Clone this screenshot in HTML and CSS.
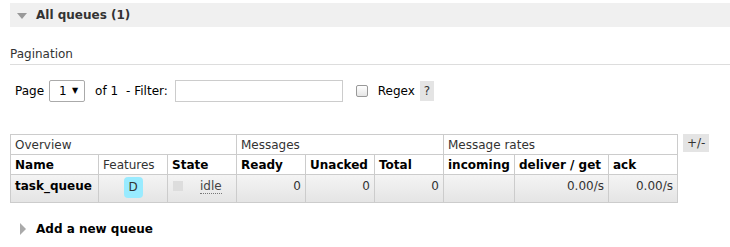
FILE: index.html
```html
<!DOCTYPE html>
<html lang="en">
<head>
  <meta charset="utf-8"/>
  <title>Queues</title>
  <link rel="stylesheet" href="styles.css">
</head>
<body>
  <div class="main">
    <div class="section">
      <div class="section-title"><span class="arrow down"></span>All queues (1)</div>
      <div class="section-body">
        <h3 class="pagination-title">Pagination</h3>
        <div class="pager">
          <span>Page</span>
          <span class="select">1 <span class="caret">&#9660;</span></span>
          <span class="of">of 1</span>
          <span>- Filter:</span>
          <span class="filter-input"></span>
          <span class="checkbox"></span>
          <span>Regex</span>
          <span class="help">?</span>
        </div>
        <div class="table-wrap">
          <table class="list">
            <thead>
              <tr class="group-row">
                <th colspan="3">Overview</th>
                <th colspan="3">Messages</th>
                <th colspan="3">Message rates</th>
              </tr>
              <tr>
                <th class="col-name">Name</th>
                <th class="col-features plain">Features</th>
                <th class="col-state">State</th>
                <th class="col-ready">Ready</th>
                <th class="col-unacked">Unacked</th>
                <th class="col-total">Total</th>
                <th class="col-incoming">incoming</th>
                <th class="col-deliver">deliver / get</th>
                <th class="col-ack">ack</th>
              </tr>
            </thead>
            <tbody>
              <tr>
                <td class="name">task_queue</td>
                <td class="c"><span class="badge">D</span></td>
                <td class="state"><span class="state-box"></span><abbr>idle</abbr></td>
                <td class="r">0</td>
                <td class="r">0</td>
                <td class="r">0</td>
                <td class="r"></td>
                <td class="r">0.00/s</td>
                <td class="r">0.00/s</td>
              </tr>
            </tbody>
          </table>
          <span class="toggle-cols">+/-</span>
        </div>
      </div>
    </div>
    <div class="section-title closed"><span class="arrow right"></span>Add a new queue</div>
  </div>
</body>
</html>
```

FILE: styles.css
```css
html, body { margin: 0; padding: 0; background: #fff; }
body { font-family: "DejaVu Sans", Verdana, sans-serif; font-size: 12px; color: #000; }
.main { padding: 3px 0 0 10px; }
.section-title { height: 24px; line-height: 24px; background: #f0f0f0; font-weight: bold; color: #333; padding-left: 26px; position: relative; }
.section-title.closed { background: none; color: #000; margin-top: 14px; }
.arrow { position: absolute; width: 0; height: 0; }
.arrow.down { left: 7px; top: 10px; border-left: 5px solid transparent; border-right: 5px solid transparent; border-top: 6px solid #999; }
.arrow.right { left: 10px; top: 6px; border-top: 6px solid transparent; border-bottom: 6px solid transparent; border-left: 6px solid #aaa; }
.pagination-title { font-size: 12px; font-weight: normal; color: #333; margin: 20px 0 0 0; padding-bottom: 3px; border-bottom: 1px solid #ddd; }
.pager { display: flex; align-items: center; gap: 0; margin-top: 14px; padding-left: 5px; height: 23px; }
.select { display: inline-flex; align-items: center; justify-content: space-between; box-sizing: border-box; width: 36px; height: 22px; border: 1px solid #aaa; border-radius: 2px; padding: 0 6px 0 9px; margin: 0 10px 0 5px; }
.caret { font-size: 8px; }
.of { margin-right: 8px; }
.filter-input { display: inline-block; box-sizing: border-box; width: 168px; height: 22px; border: 1px solid #ccc; margin-left: 7px; }
.checkbox { display: inline-block; box-sizing: border-box; width: 12px; height: 12px; border: 1px solid #999; border-radius: 2px; background: linear-gradient(#fff, #e6e6e6); margin: 0 10px 0 13px; }
.help { display: inline-block; background: #e4e4e4; width: 14px; height: 20px; line-height: 20px; text-align: center; margin-left: 5px; color: #333; }
.table-wrap { display: flex; align-items: flex-start; margin-top: 32px; }
table.list { border-collapse: collapse; border: 1px solid #ccc; }
table.list th, table.list td { border: 1px solid #ccc; padding: 0 4px; text-align: left; white-space: nowrap; }
table.list th { height: 19px; font-weight: bold; }
table.list .group-row th { font-weight: normal; color: #333; }
table.list th.plain { font-weight: normal; color: #333; }
.col-name { width: 79px; }
.col-features { width: 60px; }
.col-state { width: 60px; }
.col-ready { width: 60px; }
.col-unacked { width: 60px; }
.col-total { width: 60px; }
.col-incoming { width: 62px; }
.col-deliver { width: 85px; }
.col-ack { width: 60px; }
tbody tr { background: linear-gradient(#f4f4f4, #e4e4e4); }
tbody td { height: 28px; color: #333; vertical-align: top; padding-top: 4px !important; box-sizing: border-box; }
td.name { font-weight: bold; color: #000; }
td.r { text-align: right !important; }
td.c { text-align: center !important; padding-top: 2px !important; }
.badge { display: inline-block; width: 19px; height: 21px; line-height: 21px; border-radius: 4px; background: #99ebff; color: #333; text-align: center; }
.state-box { display: inline-block; width: 10px; height: 10px; background: #ddd; vertical-align: middle; margin: 0 17px 2px 1px; }
abbr { text-decoration: none; border-bottom: 1px dotted #777; color: #444; }
.toggle-cols { display: inline-block; background: #e4e4e4; color: #333; padding: 0 4px; height: 18px; line-height: 18px; margin-left: 5px; }
```
